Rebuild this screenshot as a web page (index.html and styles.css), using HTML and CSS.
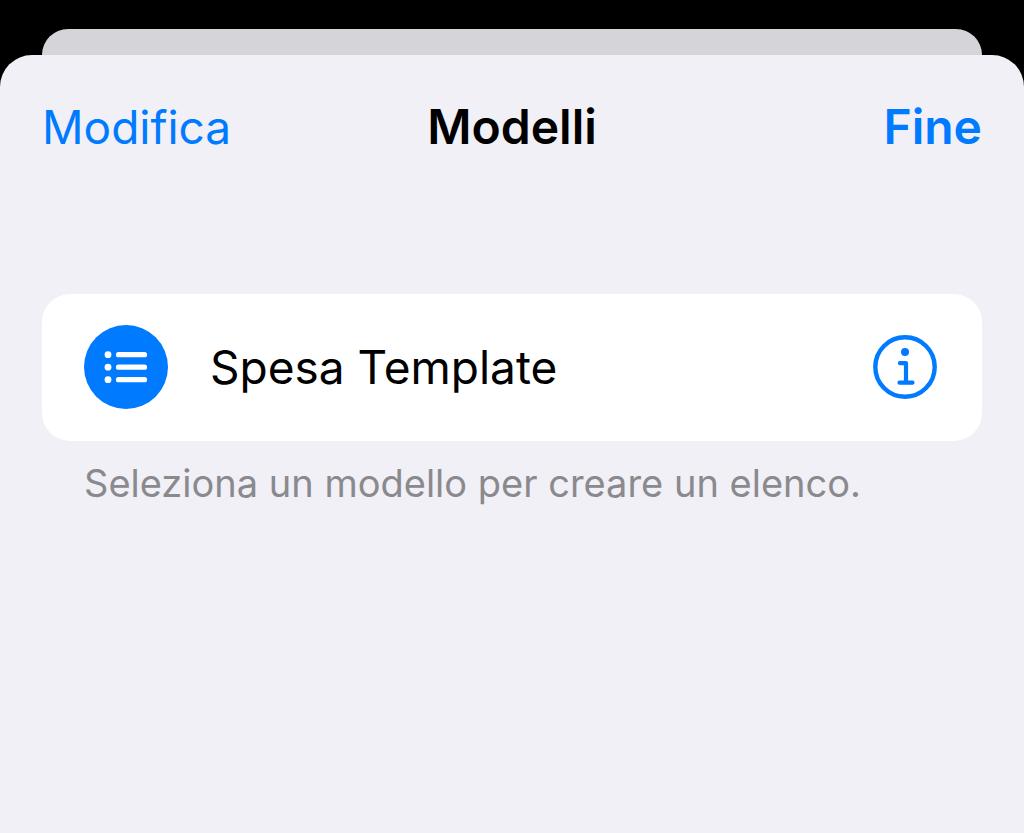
FILE: index.html
```
<!DOCTYPE html>
<html lang="it">
<head>
  <meta charset="UTF-8">
  <meta name="viewport" content="width=device-width, initial-scale=1">
  <title>Modelli</title>
  <link rel="stylesheet" href="styles.css">
</head>
<body>

  <div class="back-sheet"></div>

  <main class="sheet">
    <header class="navbar">
      <button type="button" class="nav-button">Modifica</button>
      <h1 class="nav-title">Modelli</h1>
      <button type="button" class="nav-button nav-done">Fine</button>
    </header>

    <section class="templates">
      <ul class="template-list">
        <li class="template-row">
          <button type="button" class="template-select">
            <svg class="list-icon" viewBox="0 0 84 84" aria-hidden="true">
              <circle cx="42" cy="42" r="42" fill="#007aff"/>
              <g fill="#fff">
                <circle cx="24" cy="29.7" r="3.4"/>
                <circle cx="24" cy="42.2" r="3.4"/>
                <circle cx="24" cy="54.7" r="3.4"/>
              </g>
              <path d="M34.5 29.7h26M34.5 42.2h26M34.5 54.7h26" stroke="#fff" stroke-width="5.2" stroke-linecap="round"/>
            </svg>
            <span>Spesa Template</span>
          </button>
          <button type="button" class="info-button" aria-label="Info">
            <svg class="info-icon" viewBox="0 0 64 64" aria-hidden="true">
              <circle cx="32" cy="32" r="29.7" fill="none" stroke="#007aff" stroke-width="4.4"/>
              <circle cx="32" cy="17" r="4" fill="#007aff"/>
              <path d="M27 28.2h6v19.5M26.5 47.7h13" fill="none" stroke="#007aff" stroke-width="4.2" stroke-linecap="round" stroke-linejoin="round"/>
            </svg>
          </button>
        </li>
      </ul>
      <p class="footer-note">Seleziona un modello per creare un elenco.</p>
    </section>
  </main>

</body>
</html>
```
FILE: styles.css
```
* {
  box-sizing: border-box;
}

body {
  margin: 0;
  min-height: 100vh;
  padding-top: 29px;
  display: flex;
  flex-direction: column;
  background: #000;
  color: #000;
  font-family: Inter, "Liberation Sans", sans-serif;
  font-size: 46px;
  line-height: 60px;
}

button {
  padding: 0;
  border: none;
  background: none;
  color: inherit;
  font: inherit;
  cursor: pointer;
}

.back-sheet {
  height: 26px;
  margin: 0 42px;
  background: #d5d4d9;
  border-radius: 26px 26px 0 0;
}

.sheet {
  flex: 1;
  padding: 42px;
  background: #f1f0f6;
  border-radius: 32px 32px 0 0;
}

.navbar {
  display: grid;
  grid-template-columns: 1fr auto 1fr;
  align-items: baseline;
}

.nav-button {
  justify-self: start;
  color: #007aff;
}

.nav-title {
  margin: 0;
  font-size: 48px;
  font-weight: 600;
}

.nav-done {
  justify-self: end;
  font-size: 48px;
  font-weight: 600;
}

.templates {
  margin-top: 137px;
}

.template-list {
  margin: 0;
  padding: 0;
  list-style: none;
  background: #fff;
  border-radius: 28px;
}

.template-row {
  display: flex;
  align-items: center;
  padding: 31px 45px 32px 42px;
}

.template-select {
  flex: 1;
  display: flex;
  align-items: center;
  gap: 42px;
  text-align: left;
}

.list-icon {
  display: block;
  width: 84px;
  height: 84px;
}

.info-icon {
  display: block;
  width: 64px;
  height: 64px;
}

.footer-note {
  margin: 17px 42px 0;
  color: #8a8a8e;
  font-size: 38px;
  line-height: 50px;
}
```
